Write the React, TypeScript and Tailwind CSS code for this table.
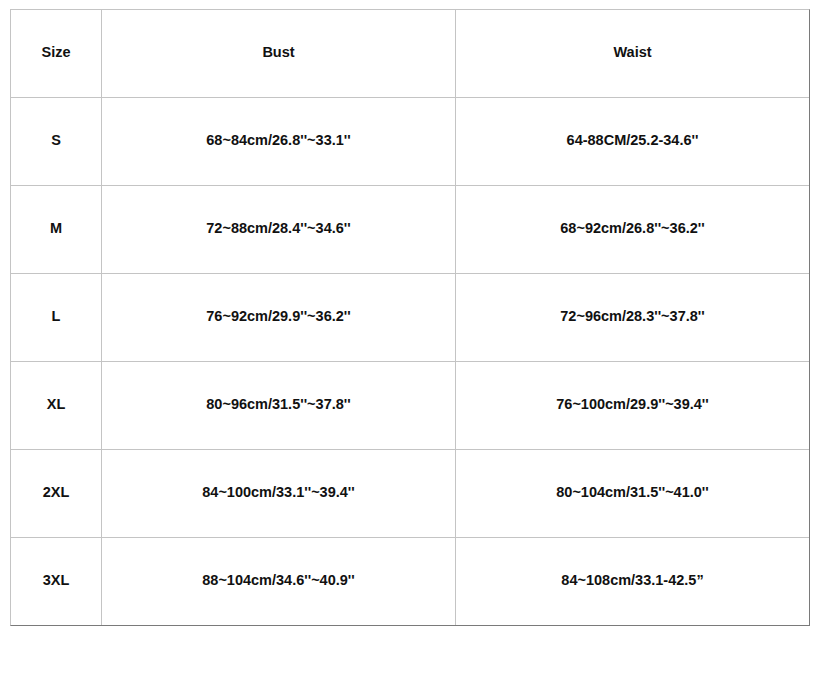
import React from "react";

const rows: [string, string, string][] = [
  ["Size", "Bust", "Waist"],
  ["S", "68~84cm/26.8''~33.1''", "64-88CM/25.2-34.6''"],
  ["M", "72~88cm/28.4''~34.6''", "68~92cm/26.8''~36.2''"],
  ["L", "76~92cm/29.9''~36.2''", "72~96cm/28.3''~37.8''"],
  ["XL", "80~96cm/31.5''~37.8''", "76~100cm/29.9''~39.4''"],
  ["2XL", "84~100cm/33.1''~39.4''", "80~104cm/31.5''~41.0''"],
  ["3XL", "88~104cm/34.6''~40.9''", "84~108cm/33.1-42.5\u201d"],
];

export default function App() {
  return (
    <div className="w-[824px] h-[687px] bg-white pt-[9px] pl-[10px]" style={{ fontFamily: '"Liberation Sans", Arial, sans-serif' }}>
      <div className="w-[800px] border-t border-l border-[#c4c4c4] border-r border-r-[#7a7a7a] border-b border-b-[#7a7a7a]">
        {rows.map((r, i) => (
          <div key={i} className={`grid grid-cols-[91px_354px_353px] ${i < rows.length - 1 ? "h-[88px] border-b border-[#c4c4c4]" : "h-[87px]"}`}>
            {r.map((c, j) => (
              <div
                key={j}
                className={`flex items-center justify-center pb-[1px] text-[14.5px] font-bold text-[#111] ${j < 2 ? "border-r border-[#c4c4c4]" : ""}`}
              >
                {c}
              </div>
            ))}
          </div>
        ))}
      </div>
    </div>
  );
}
